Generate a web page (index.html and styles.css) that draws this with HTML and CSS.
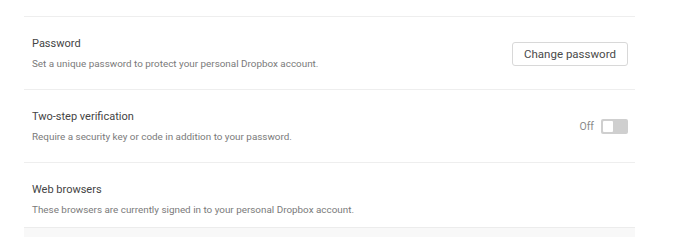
FILE: index.html
```html
<!DOCTYPE html>
<html>
<head>
<title>Security settings</title>
<link rel="stylesheet" href="styles.css">
</head>
<body>
<div class="settings">
	<div class="row">
		<div class="info">
			<div class="title">Password</div>
			<div class="desc">Set a unique password to protect your personal Dropbox account.</div>
		</div>
		<button class="btn">Change password</button>
	</div>
	<div class="row">
		<div class="info">
			<div class="title">Two-step verification</div>
			<div class="desc">Require a security key or code in addition to your password.</div>
		</div>
		<div class="toggle-wrap">
			<span class="state">Off</span>
			<span class="toggle"><span class="knob"></span></span>
		</div>
	</div>
	<div class="row last">
		<div class="info">
			<div class="title">Web browsers</div>
			<div class="desc">These browsers are currently signed in to your personal Dropbox account.</div>
		</div>
	</div>
	<div class="panel"></div>
</div>
</body>
</html>
```

FILE: styles.css
```css
body{
	margin: 0;
	background: #fff;
	font-family: Roboto, "Liberation Sans", sans-serif;
}
.settings{
	width: 611px;
	margin-left: 24px;
	padding-top: 16px;
}
.row{
	display: flex;
	align-items: center;
	justify-content: space-between;
	border-top: 1px solid #eeeeee;
	padding: 19px 7px 18px 8px;
	height: 35px;
}
.row.last{
	padding-bottom: 10px;
}
.title{
	font-size: 11px;
	line-height: 16px;
	color: #444444;
	margin-bottom: 4px;
}
.desc{
	font-size: 9.9px;
	line-height: 15px;
	color: #7a7a7a;
}
.btn{
	font-family: Roboto, "Liberation Sans", sans-serif;
	font-size: 11.5px;
	color: #4a4a4a;
	background: #fff;
	border: 1px solid #d8d8d8;
	border-radius: 3px;
	width: 116px;
	height: 24px;
	padding: 0;
}
.toggle-wrap{
	display: flex;
	align-items: center;
	gap: 7px;
}
.state{
	font-size: 10.5px;
	color: #8a8a8a;
}
.toggle{
	display: flex;
	align-items: center;
	width: 27px;
	height: 15px;
	box-sizing: border-box;
	background: #cfcfcf;
	border-radius: 2px;
	padding: 2px;
}
.knob{
	width: 10px;
	height: 11px;
	background: #fff;
	border-radius: 1px;
}
.panel{
	height: 10px;
	background: #f8f8f8;
	border-top: 1px solid #ececec;
}
```
